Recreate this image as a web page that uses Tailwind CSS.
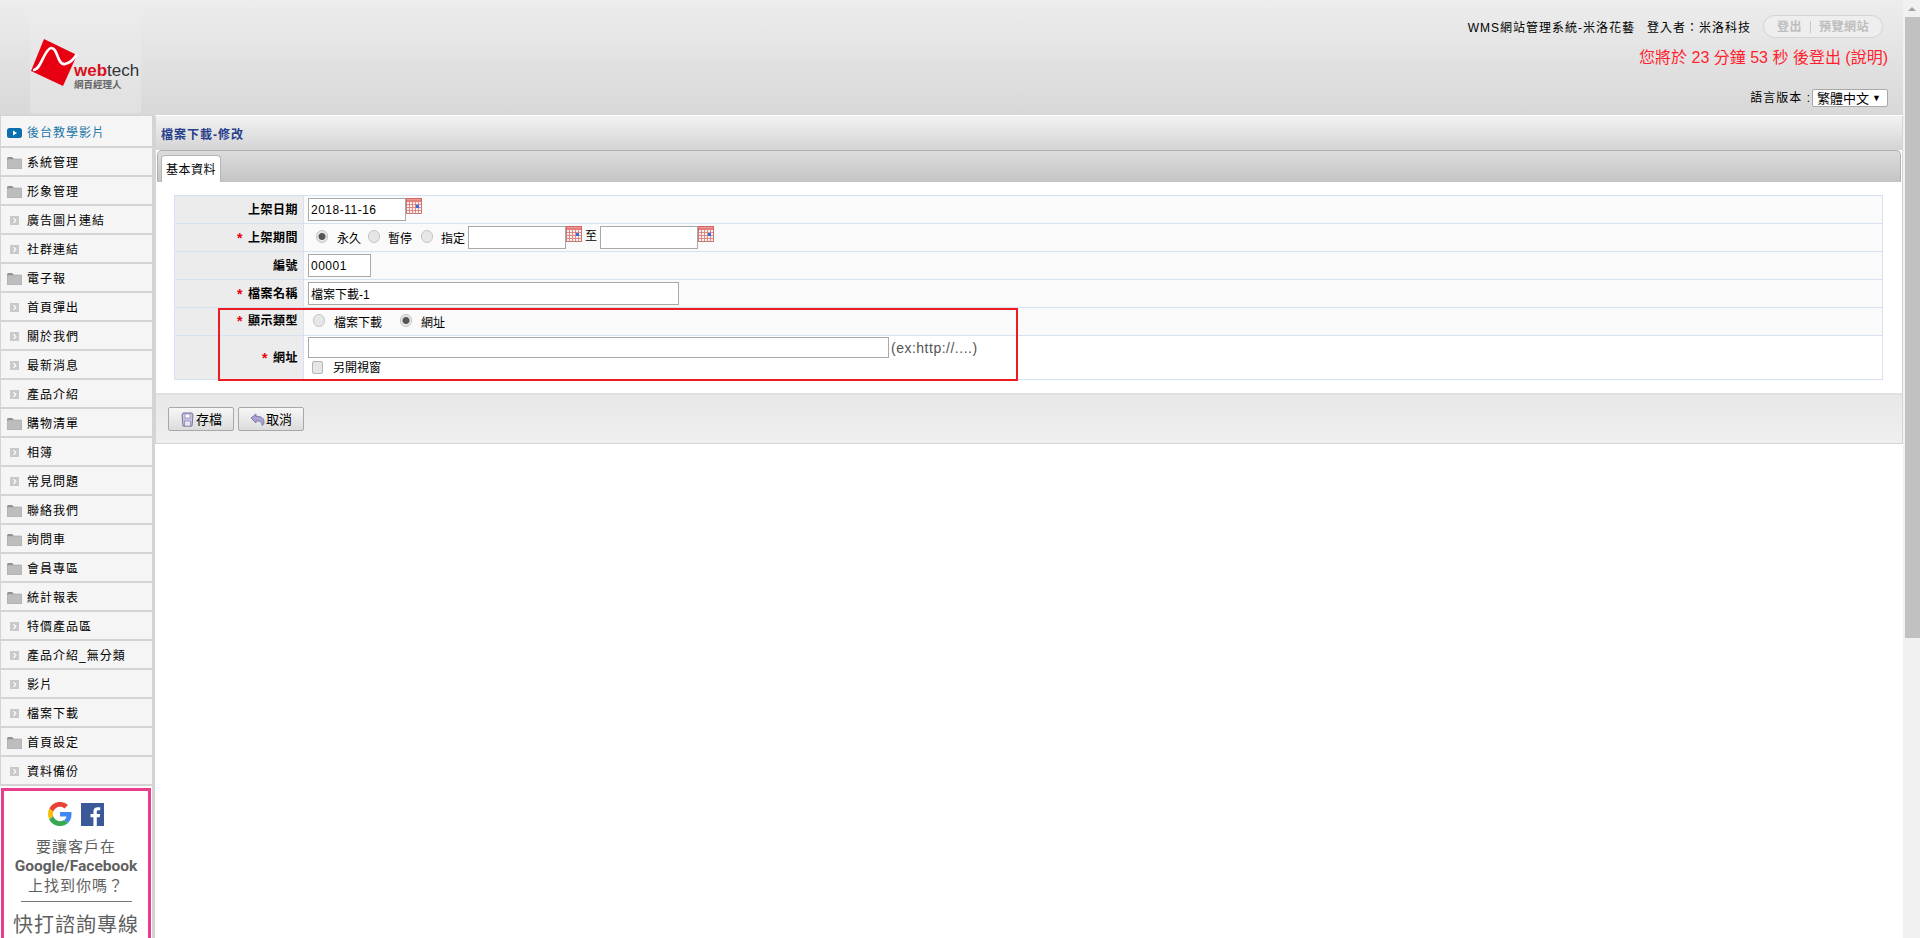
<!DOCTYPE html>
<html lang="zh-Hant">
<head>
  <meta charset="UTF-8" />
  <title>檔案下載-修改</title>
  <script src="https://cdn.jsdelivr.net/npm/@tailwindcss/browser@4"></script>
</head>
<body class="bg-white text-[12px] leading-none text-black font-['Liberation_Sans','Noto_Sans_CJK_TC',sans-serif]">
  <!-- shared icons -->
  <svg class="hidden">
    <symbol id="folder" viewBox="0 0 15 13">
      <path d="M0 2.5Q0 1 1.5 1H5L6.5 2.5V4H0Z" fill="#8e8e8e"/>
      <rect x="0" y="3" width="15" height="10" rx="1" fill="#bdbdbd" stroke="#a2a2a2" stroke-width=".6"/>
    </symbol>
    <symbol id="arrow" viewBox="0 0 9 9">
      <rect width="9" height="9" fill="#c9c9c9"/>
      <path d="M3.5 2.2 5.8 4.5 3.5 6.8" fill="none" stroke="#fff" stroke-width="1.2"/>
    </symbol>
    <symbol id="cal" viewBox="0 0 16 16">
      <rect x=".5" y=".5" width="15" height="15" fill="#fbeeee" stroke="#c77a75"/>
      <rect x="0" y="0" width="16" height="4" fill="#d8645e"/>
      <path d="M1 1.500H15M1 3H15" stroke="#f3c4c0" stroke-width=".6"/>
      <path d="M1 6.500H15M1 9.500H15M1 12.500H15M3.500 4V15M6.500 4V15M9.500 4V15M12.500 4V15" stroke="#d8817c" stroke-width=".9"/>
      <rect x="10" y="7" width="3" height="3" fill="#2f6fe0"/>
    </symbol>
  </svg>

  <div class="flex h-[938px] overflow-hidden">
    <div class="flex-1 min-w-0 flex flex-col">
      <!-- header -->
      <header class="h-[115px] shrink-0 flex justify-between bg-gradient-to-b from-[#ededed] to-[#d8d8d8]">
        <div class="ml-[30px] mt-[10px] w-[111px] h-[103px] flex items-end bg-[#eeeeee]/40">
          <svg width="111" height="90" viewBox="0 0 111 90">
            <path d="M14 16 47 32 33 63 1 48Z" fill="#e60012"/>
            <path d="M3 47C11 48 14 26 21 25 28 24 27 43 35 41 40 40 44 36 47 31" fill="none" stroke="#fff" stroke-width="2.600"/>
            <text x="44" y="53" font-family="Liberation Sans" font-size="17" font-weight="700" fill="#d8121c">web<tspan font-weight="400" fill="#333">tech</tspan></text>
            <text x="44" y="65" font-family="Noto Sans CJK TC" font-size="9.500" font-weight="700" fill="#666">網頁經理人</text>
          </svg>
        </div>
        <div class="mr-[15px] flex flex-col items-end">
          <div class="mt-[15px] flex items-center tracking-[1px] h-[23px]">
            <span class="pt-[3px]">WMS網站管理系統-米洛花藝</span>
            <span class="ml-[12px] pt-[3px]">登入者：米洛科技</span>
            <div class="ml-3 w-[120px] h-[23px] mr-[5px] rounded-full border border-[#d4d4d4] bg-[#eeeeee] flex items-center justify-center font-bold text-[#bdbdbd] tracking-[0.5px]">
              <span>登出</span><span class="mx-2 w-px h-3 bg-[#c8c8c8]"></span><span>預覽網站</span>
            </div>
          </div>
          <div class="mt-[10px] text-[16px] text-[#ff1f2f] leading-[20px]">您將於 23 分鐘 53 秒 後登出 (說明)</div>
          <div class="mt-[21px] flex items-center">
            <span class="tracking-[1px]">語言版本 :</span>
            <div class="w-[76px] h-[18px] ml-px bg-white border border-[#a9a9a9] rounded-[2px] flex items-center justify-between pl-[4px] pr-[6px] text-[13px]">
              <span>繁體中文</span><span class="text-[9px]">▼</span>
            </div>
          </div>
        </div>
      </header>

      <div class="flex-1 min-h-0 flex">
        <!-- sidebar -->
        <aside class="w-[155px] shrink-0 border-r-[3px] border-[#d4d4d4] tracking-[1px]">
          <nav class="border-l border-[#d4d4d4] border-t">
            <a class="h-[32px] pl-[6px] pt-[4px] flex items-center gap-[5px] bg-[#f5f5f5] border-b-2 border-[#d4d4d4] text-[#1c75a8]">
              <svg class="w-[15px] h-[10px]" viewBox="0 0 15 10"><rect width="15" height="10" rx="2.5" fill="#0b70ad"/><path d="M6 2.5 10 5 6 7.5Z" fill="#fff"/></svg>
              後台教學影片
            </a>
            <a class="h-[29px] pl-[6px] pt-[2px] flex items-center gap-[5px] bg-[#f5f5f5] border-b-2 border-[#d4d4d4]"><svg class="w-[15px] h-[13px]"><use href="#folder"/></svg>系統管理</a>
            <a class="h-[29px] pl-[6px] pt-[2px] flex items-center gap-[5px] bg-[#f5f5f5] border-b-2 border-[#d4d4d4]"><svg class="w-[15px] h-[13px]"><use href="#folder"/></svg>形象管理</a>
            <a class="h-[29px] pl-[9px] pt-[2px] flex items-center gap-[8px] bg-[#f5f5f5] border-b-2 border-[#d4d4d4]"><svg class="w-[9px] h-[9px]"><use href="#arrow"/></svg>廣告圖片連結</a>
            <a class="h-[29px] pl-[9px] pt-[2px] flex items-center gap-[8px] bg-[#f5f5f5] border-b-2 border-[#d4d4d4]"><svg class="w-[9px] h-[9px]"><use href="#arrow"/></svg>社群連結</a>
            <a class="h-[29px] pl-[6px] pt-[2px] flex items-center gap-[5px] bg-[#f5f5f5] border-b-2 border-[#d4d4d4]"><svg class="w-[15px] h-[13px]"><use href="#folder"/></svg>電子報</a>
            <a class="h-[29px] pl-[9px] pt-[2px] flex items-center gap-[8px] bg-[#f5f5f5] border-b-2 border-[#d4d4d4]"><svg class="w-[9px] h-[9px]"><use href="#arrow"/></svg>首頁彈出</a>
            <a class="h-[29px] pl-[9px] pt-[2px] flex items-center gap-[8px] bg-[#f5f5f5] border-b-2 border-[#d4d4d4]"><svg class="w-[9px] h-[9px]"><use href="#arrow"/></svg>關於我們</a>
            <a class="h-[29px] pl-[9px] pt-[2px] flex items-center gap-[8px] bg-[#f5f5f5] border-b-2 border-[#d4d4d4]"><svg class="w-[9px] h-[9px]"><use href="#arrow"/></svg>最新消息</a>
            <a class="h-[29px] pl-[9px] pt-[2px] flex items-center gap-[8px] bg-[#f5f5f5] border-b-2 border-[#d4d4d4]"><svg class="w-[9px] h-[9px]"><use href="#arrow"/></svg>產品介紹</a>
            <a class="h-[29px] pl-[6px] pt-[2px] flex items-center gap-[5px] bg-[#f5f5f5] border-b-2 border-[#d4d4d4]"><svg class="w-[15px] h-[13px]"><use href="#folder"/></svg>購物清單</a>
            <a class="h-[29px] pl-[9px] pt-[2px] flex items-center gap-[8px] bg-[#f5f5f5] border-b-2 border-[#d4d4d4]"><svg class="w-[9px] h-[9px]"><use href="#arrow"/></svg>相簿</a>
            <a class="h-[29px] pl-[9px] pt-[2px] flex items-center gap-[8px] bg-[#f5f5f5] border-b-2 border-[#d4d4d4]"><svg class="w-[9px] h-[9px]"><use href="#arrow"/></svg>常見問題</a>
            <a class="h-[29px] pl-[6px] pt-[2px] flex items-center gap-[5px] bg-[#f5f5f5] border-b-2 border-[#d4d4d4]"><svg class="w-[15px] h-[13px]"><use href="#folder"/></svg>聯絡我們</a>
            <a class="h-[29px] pl-[6px] pt-[2px] flex items-center gap-[5px] bg-[#f5f5f5] border-b-2 border-[#d4d4d4]"><svg class="w-[15px] h-[13px]"><use href="#folder"/></svg>詢問車</a>
            <a class="h-[29px] pl-[6px] pt-[2px] flex items-center gap-[5px] bg-[#f5f5f5] border-b-2 border-[#d4d4d4]"><svg class="w-[15px] h-[13px]"><use href="#folder"/></svg>會員專區</a>
            <a class="h-[29px] pl-[6px] pt-[2px] flex items-center gap-[5px] bg-[#f5f5f5] border-b-2 border-[#d4d4d4]"><svg class="w-[15px] h-[13px]"><use href="#folder"/></svg>統計報表</a>
            <a class="h-[29px] pl-[9px] pt-[2px] flex items-center gap-[8px] bg-[#f5f5f5] border-b-2 border-[#d4d4d4]"><svg class="w-[9px] h-[9px]"><use href="#arrow"/></svg>特價產品區</a>
            <a class="h-[29px] pl-[9px] pt-[2px] flex items-center gap-[8px] bg-[#f5f5f5] border-b-2 border-[#d4d4d4]"><svg class="w-[9px] h-[9px]"><use href="#arrow"/></svg>產品介紹_無分類</a>
            <a class="h-[29px] pl-[9px] pt-[2px] flex items-center gap-[8px] bg-[#f5f5f5] border-b-2 border-[#d4d4d4]"><svg class="w-[9px] h-[9px]"><use href="#arrow"/></svg>影片</a>
            <a class="h-[29px] pl-[9px] pt-[2px] flex items-center gap-[8px] bg-[#f5f5f5] border-b-2 border-[#d4d4d4]"><svg class="w-[9px] h-[9px]"><use href="#arrow"/></svg>檔案下載</a>
            <a class="h-[29px] pl-[6px] pt-[2px] flex items-center gap-[5px] bg-[#f5f5f5] border-b-2 border-[#d4d4d4]"><svg class="w-[15px] h-[13px]"><use href="#folder"/></svg>首頁設定</a>
            <a class="h-[29px] pl-[9px] pt-[2px] flex items-center gap-[8px] bg-[#f5f5f5] border-b-2 border-[#d4d4d4]"><svg class="w-[9px] h-[9px]"><use href="#arrow"/></svg>資料備份</a>
          </nav>
          <!-- promo box, cut off by the window -->
          <div class="mt-[2px] ml-px w-[150px] h-[200px] border-[3px] border-b-0 border-[#e83e8c] bg-white flex flex-col items-center tracking-normal text-[#606060] font-['Roboto','Noto_Sans_CJK_TC',sans-serif]">
            <div class="mt-[11px] flex items-center gap-[9px]">
              <svg class="w-[24px] h-[24px]" viewBox="0 0 48 48">
                <path fill="#EA4335" d="M24 9.5c3.5 0 6.700 1.300 9.100 3.500l6.800-6.800C35.800 2.400 30.300 0 24 0 14.600 0 6.500 5.400 2.600 13.200l7.900 6.200C12.400 13.600 17.700 9.500 24 9.500z"/>
                <path fill="#4285F4" d="M47 24.500c0-1.600-.1-3.100-.4-4.500H24v9h13c-.6 3-2.300 5.500-4.800 7.200l7.700 6c4.500-4.200 7.100-10.300 7.100-17.700z"/>
                <path fill="#FBBC05" d="M10.500 28.600c-.5-1.400-.8-3-.8-4.600s.3-3.200.8-4.600l-7.900-6.200C.9 16.500 0 20.100 0 24s.9 7.500 2.600 10.800l7.900-6.200z"/>
                <path fill="#34A853" d="M24 48c6.500 0 11.900-2.100 15.900-5.800l-7.700-6c-2.100 1.400-4.900 2.300-8.200 2.300-6.300 0-11.600-4.100-13.500-9.900l-7.900 6.200C6.500 42.600 14.600 48 24 48z"/>
              </svg>
              <svg class="w-[23px] h-[23px]" viewBox="0 0 23 23"><rect width="23" height="23" fill="#3b5998"/><path d="M15.800 23v-8.700h2.900l.4-3.300h-3.300V8.900c0-1 .3-1.600 1.700-1.600h1.700V4.300c-.3 0-1.400-.1-2.500-.1-2.600 0-4.300 1.500-4.300 4.400V11H9.500v3.300h2.900V23z" fill="#fff"/></svg>
            </div>
            <div class="mt-[11px] text-[15px] leading-[20px] tracking-[1px]">要讓客戶在</div>
            <div class="text-[15.500px] leading-[19px] font-bold">Google/Facebook</div>
            <div class="text-[15px] leading-[20px] tracking-[1px]">上找到你嗎？</div>
            <div class="mt-[5px] w-[111px] h-px bg-[#777]"></div>
            <div class="mt-[11px] text-[20px] leading-[24px] tracking-[1px]">快打諮詢專線</div>
          </div>
        </aside>

        <!-- main panel -->
        <main class="flex-1 min-w-0 pt-px">
          <section class="relative border-b border-[#a9c4dc] border-l border-r border-[#d4d4d4]">
            <h1 class="h-[34px] flex items-center pl-[5px] pt-[3px] font-bold text-[#27408b] tracking-[1px] bg-gradient-to-b from-[#f2f2f2] to-[#d4d4d4]">檔案下載-修改</h1>
            <div class="h-[32px] mx-px flex items-end border border-b-0 border-[#b0b0b0] rounded-t-[5px] bg-gradient-to-b from-[#dcdcdc] to-[#c4c4c4] border-b-[#a8a8a8]">
              <div class="ml-[3px] h-[27px] w-[60px] pt-[2px] flex items-center justify-center bg-white border border-b-0 border-[#b5b5b5] rounded-t-[4px] tracking-[0.5px]">基本資料</div>
            </div>

            <div class="pt-[13px] px-[18px] pb-[13px] border-b-2 border-[#e0e0e0]">
              <div class="relative border border-b-0 border-[#d8e0f4] w-[1709px]">
                <div class="flex h-[28px] border-b border-[#d8e0f4] bg-[#fafafa]">
                  <div class="w-[129px] shrink-0 bg-[#ececec] border-r border-[#d8e0f4] flex items-center justify-end pr-[5px] font-bold tracking-[0.5px]">上架日期</div>
                  <div class="flex-1 flex items-center pl-[4px]">
                    <input value="2018-11-16" class="w-[98px] h-[23px] border border-[#a9a9a9] bg-white px-[2px] text-[12px] tracking-[0.5px]" />
                    <svg class="w-[16px] h-[16px] mb-[7px]"><use href="#cal"/></svg>
                  </div>
                </div>
                <div class="flex h-[28px] border-b border-[#d8e0f4] bg-[#fafafa]">
                  <div class="w-[129px] shrink-0 bg-[#ececec] border-r border-[#d8e0f4] flex items-center justify-end pr-[5px] font-bold tracking-[0.5px]"><span class="text-[#e60012] text-[14px] mr-[5px]">*</span>上架期間</div>
                  <div class="flex-1 flex items-center pl-[12px]">
                    <input type="radio" name="period" checked class="mb-[2px] appearance-none w-[12px] h-[13px] rounded-full border border-[#c6c6c6] bg-[#e6e6e6] checked:bg-[radial-gradient(circle,#555_0_3px,#e6e6e6_4px)]" />
                    <span class="ml-[9px] mt-[2px]">永久</span>
                    <input type="radio" name="period" class="ml-[7px] mb-[2px] appearance-none w-[12px] h-[13px] rounded-full border border-[#c6c6c6] bg-[#e6e6e6] checked:bg-[radial-gradient(circle,#555_0_3px,#e6e6e6_4px)]" />
                    <span class="ml-[8px] mt-[2px]">暫停</span>
                    <input type="radio" name="period" class="ml-[9px] mb-[2px] appearance-none w-[12px] h-[13px] rounded-full border border-[#c6c6c6] bg-[#e6e6e6] checked:bg-[radial-gradient(circle,#555_0_3px,#e6e6e6_4px)]" />
                    <span class="ml-[8px] mt-[2px]">指定</span>
                    <input class="ml-[3px] w-[98px] h-[23px] border border-[#a9a9a9] bg-white" />
                    <svg class="w-[16px] h-[16px] mb-[7px]"><use href="#cal"/></svg>
                    <span class="mx-[3px] mb-[3px]">至</span>
                    <input class="w-[98px] h-[23px] border border-[#a9a9a9] bg-white" />
                    <svg class="w-[16px] h-[16px] mb-[7px]"><use href="#cal"/></svg>
                  </div>
                </div>
                <div class="flex h-[28px] border-b border-[#d8e0f4] bg-[#fafafa]">
                  <div class="w-[129px] shrink-0 bg-[#ececec] border-r border-[#d8e0f4] flex items-center justify-end pr-[5px] font-bold tracking-[0.5px]">編號</div>
                  <div class="flex-1 flex items-center pl-[4px]">
                    <input value="00001" class="w-[63px] h-[23px] border border-[#a9a9a9] bg-white px-[2px] text-[12px] tracking-[0.5px]" />
                  </div>
                </div>
                <div class="flex h-[28px] border-b border-[#d8e0f4] bg-[#fafafa]">
                  <div class="w-[129px] shrink-0 bg-[#ececec] border-r border-[#d8e0f4] flex items-center justify-end pr-[5px] font-bold tracking-[0.5px]"><span class="text-[#e60012] text-[14px] mr-[5px]">*</span>檔案名稱</div>
                  <div class="flex-1 flex items-center pl-[4px]">
                    <input value="檔案下載-1" class="w-[371px] h-[23px] border border-[#a9a9a9] bg-white px-[2px] text-[12px]" />
                  </div>
                </div>
                <div class="flex h-[28px] border-b border-[#d8e0f4] bg-[#fafafa]">
                  <div class="w-[129px] shrink-0 bg-[#ececec] border-r border-[#d8e0f4] flex items-center justify-end pr-[5px] pb-[2px] font-bold tracking-[0.5px]"><span class="text-[#e60012] text-[14px] mr-[5px]">*</span>顯示類型</div>
                  <div class="flex-1 flex items-center pl-[9px]">
                    <input type="radio" name="kind" class="mb-[2px] appearance-none w-[12px] h-[13px] rounded-full border border-[#c6c6c6] bg-[#e6e6e6] checked:bg-[radial-gradient(circle,#555_0_3px,#e6e6e6_4px)]" />
                    <span class="ml-[9px] mt-[2px]">檔案下載</span>
                    <input type="radio" name="kind" checked class="ml-[18px] mb-[2px] appearance-none w-[12px] h-[13px] rounded-full border border-[#c6c6c6] bg-[#e6e6e6] checked:bg-[radial-gradient(circle,#555_0_3px,#e6e6e6_4px)]" />
                    <span class="ml-[9px] mt-[2px]">網址</span>
                  </div>
                </div>
                <div class="flex h-[44px] border-b border-[#d8e0f4] bg-white">
                  <div class="w-[129px] shrink-0 bg-[#ececec] border-r border-[#d8e0f4] flex items-center justify-end pr-[5px] font-bold tracking-[0.5px]"><span class="text-[#e60012] text-[14px] mr-[5px]">*</span>網址</div>
                  <div class="flex-1 pl-[4px] pt-px">
                    <div class="flex items-center">
                      <input class="w-[581px] h-[21px] border border-[#a9a9a9] bg-white" />
                      <span class="ml-[2px] text-[#555] text-[14px] tracking-[0.5px]">(ex:http://....)</span>
                    </div>
                    <div class="mt-[3px] pl-[4px] flex items-center">
                      <input type="checkbox" class="appearance-none w-[11px] h-[13px] rounded-[2px] border border-[#b5b5b5] bg-[#e6e6e6]" />
                      <span class="ml-[10px] mt-px">另開視窗</span>
                    </div>
                  </div>
                </div>
                <!-- red highlight drawn on top of the table -->
                <div class="absolute left-[43px] top-[112px] w-[800px] h-[73px] border-2 border-[#ed1c24]"></div>
              </div>
            </div>

            <div class="h-[48px] flex items-center gap-[4px] pl-[12px] bg-gradient-to-b from-[#e8e8e8] to-[#efefef]">
              <button class="w-[66px] h-[24px] flex items-center justify-center gap-[1px] text-[13px] border border-[#a8a8a8] rounded-[2px] bg-gradient-to-b from-[#f7f7f7] to-[#dcdcdc]">
                <svg class="w-[15px] h-[15px]" viewBox="0 0 15 15"><path d="M3 1H12L13 3 12 14H3L2 3Z" fill="#c9c4e2" stroke="#77739f"/><rect x="5" y="2" width="5" height="4" fill="#fff" stroke="#77739f" stroke-width=".6"/><rect x="4.500" y="9" width="6" height="5" fill="#e8e6f4" stroke="#77739f" stroke-width=".6"/></svg>
                存檔
              </button>
              <button class="w-[66px] h-[24px] flex items-center justify-center gap-[1px] text-[13px] border border-[#a8a8a8] rounded-[2px] bg-gradient-to-b from-[#f7f7f7] to-[#dcdcdc]">
                <svg class="w-[15px] h-[15px]" viewBox="0 0 15 15"><path d="M1 6 6 2V4.500C10 4 14 5.500 14 10 14 12 13 13 12 13.500 12.500 10.500 10 8.500 6 9V11Z" fill="#a9a2d2" stroke="#6f6a98" stroke-width=".8"/></svg>
                取消
              </button>
            </div>
          </section>
        </main>
      </div>
    </div>

    <!-- scrollbar -->
    <div class="w-[17px] shrink-0 bg-[#f1f1f1] flex flex-col items-end">
      <div class="h-[17px] w-full flex items-center justify-center">
        <div class="w-0 h-0 border-x-[4px] border-x-transparent border-b-[4px] border-b-[#a3a3a3]"></div>
      </div>
      <div class="w-[15px] h-[621px] bg-[#c1c1c1]"></div>
    </div>
  </div>
</body>
</html>
